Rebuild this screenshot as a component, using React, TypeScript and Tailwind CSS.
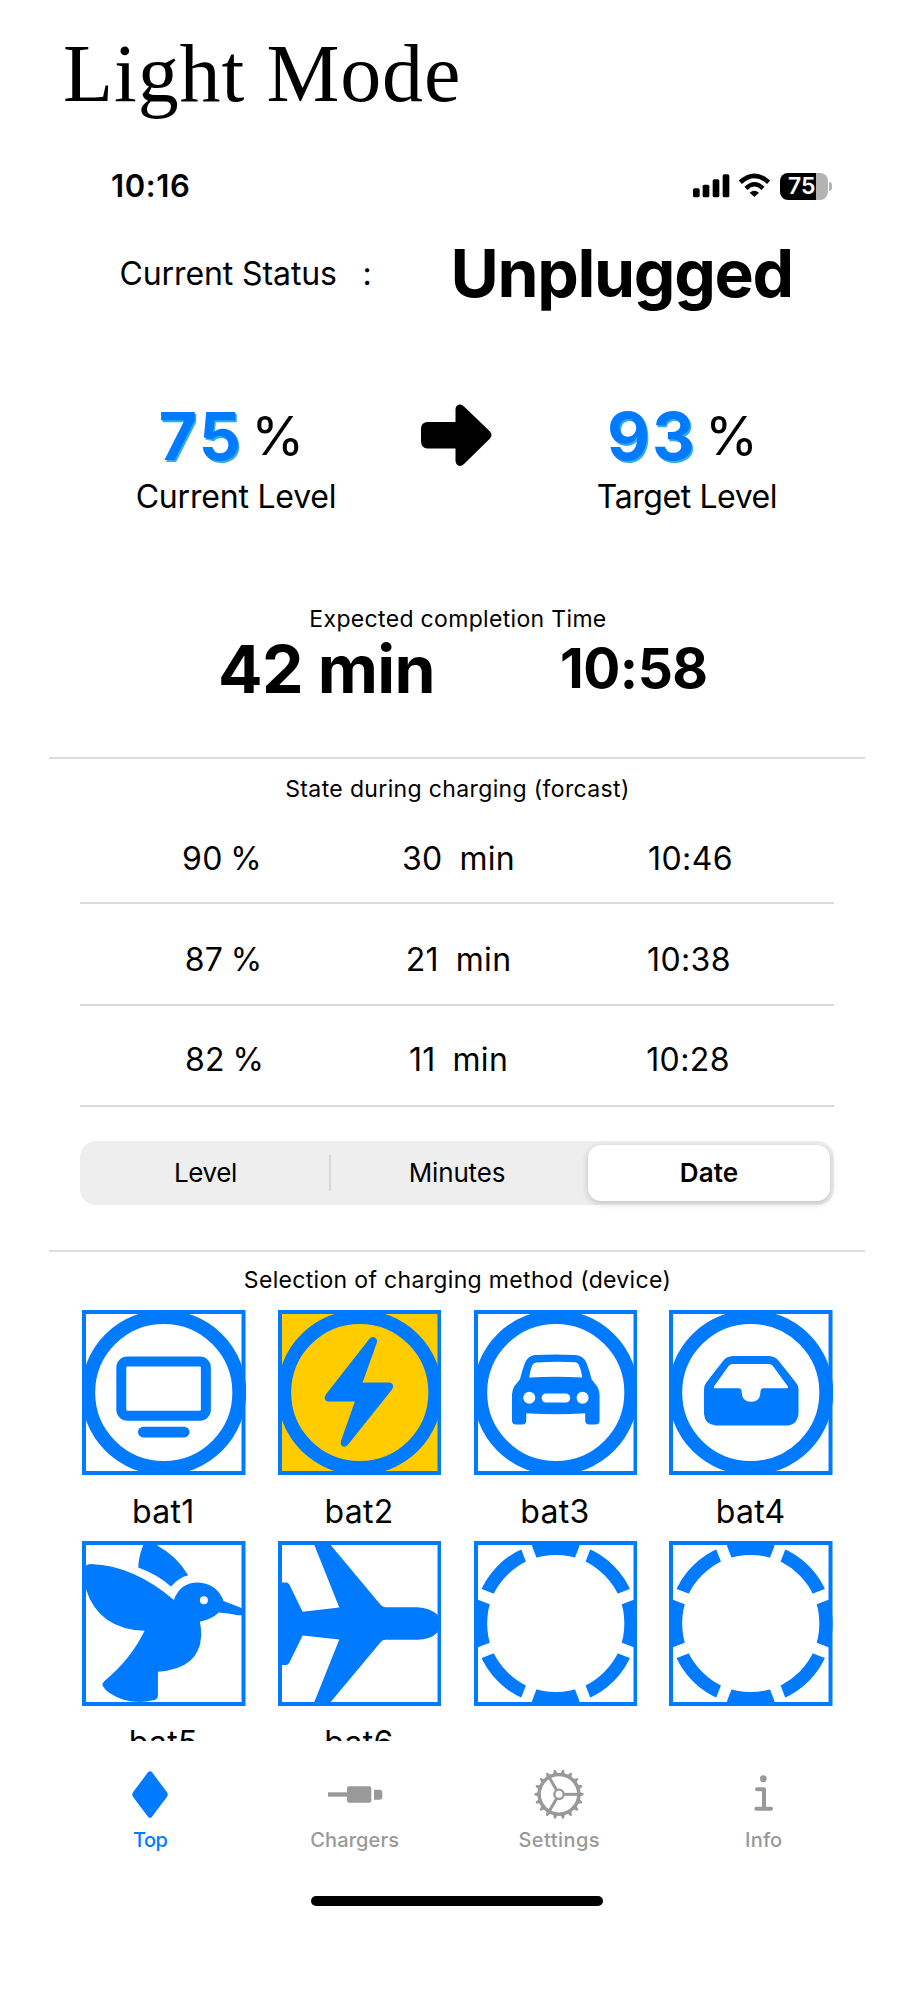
import type { ReactNode } from "react";

const BLUE = "#007aff";

function StatusIcons() {
  return (
    <div className="flex items-center">
      <svg className="h-[28px] w-[78px]" viewBox="757 66 234 84">
        <rect x="760" y="115" width="20" height="27" rx="5" />
        <rect x="789" y="104" width="20" height="38" rx="5" />
        <rect x="819" y="88" width="20" height="54" rx="5" />
        <rect x="849" y="73" width="20" height="69" rx="5" />
        <path d="M902 97Q944 58 987 97" fill="none" stroke="#000" strokeWidth="14" />
        <path d="M919 115Q944 91 970 115" fill="none" stroke="#000" strokeWidth="13" />
        <path d="M944 141L930 128Q944 116 958 128Z" />
      </svg>
      <div className="ml-[10px] flex h-[27px] w-[48px] items-center rounded-[8px] bg-[linear-gradient(to_right,#000_36px,#b3b3b3_36px)] pl-[8px] text-[23px] font-semibold leading-none text-white">
        75
      </div>
      <div className="ml-[1px] h-[9px] w-[3px] rounded-r-full bg-[#b3b3b3]" />
    </div>
  );
}

function Level({ value, label, className, numberClass, percentClass, labelTracking }: { value: string; label: string; className: string; numberClass: string; percentClass: string; labelTracking: string }) {
  return (
    <div className={className}>
      <div className="flex h-[80px] items-center justify-center">
        <span className={`text-[66px] font-bold leading-[80px] text-[#007aff] [text-shadow:1.5px_1.5px_0_#32ade6] ${numberClass}`}>{value}</span>
        <span className={`text-[54px] leading-[76px] ${percentClass}`}>%</span>
      </div>
      <div className={`text-center text-[32px] leading-[41px] ${labelTracking}`}>{label}</div>
    </div>
  );
}

function Ring() {
  return <circle cx="245.5" cy="248" r="227" fill="none" stroke={BLUE} strokeWidth="42" />;
}

function MonitorIcon() {
  return (
    <>
      <Ring />
      <g transform="translate(-35 -28)">
        <rect x="153" y="183" width="254" height="163" rx="18" fill="none" stroke={BLUE} strokeWidth="30" />
        <rect x="203" y="379" width="155" height="32" rx="16" />
      </g>
    </>
  );
}

function BoltIcon() {
  return (
    <>
      <Ring />
      <path transform="translate(-622 -28)" d="M896 115Q906 105 916 113Q922 118 919 126L876 246H957Q968 248 968 259Q966 265 962 270L832 433Q824 442 814 437Q808 431 811 422L853 303H772Q762 301 762 290Q764 284 768 279Z" />
    </>
  );
}

function CarIcon() {
  return (
    <>
      <Ring />
      <g transform="translate(-41 -28)">
        <path
          fillRule="evenodd"
          d="M225 163Q287 160 345 163Q370 165 379 187Q388 210 394 236L411 258Q418 270 418 284V360Q418 372 406 372H387Q375 372 375 360V338Q287 345 198 338V360Q198 372 186 372H167Q155 372 155 360V282Q155 270 162 257L179 236Q186 207 194 187Q203 165 225 163ZM228 186Q220 187 216 194Q209 210 207 231Q287 226 366 231Q364 210 356 193Q352 186 345 185Q287 182 228 186Z"
        />
        <circle cx="207" cy="292" r="18" fill="#fff" />
        <circle cx="367" cy="292" r="18" fill="#fff" />
        <rect x="244" y="279" width="86" height="27" rx="13.5" fill="#fff" />
      </g>
    </>
  );
}

function TrayIcon() {
  return (
    <>
      <Ring />
      <path
        transform="translate(-628 -28)"
        fillRule="evenodd"
        d="M820 166H928Q946 167 956 179L1009 246Q1017 255 1017 268V338Q1014 373 982 375H768Q736 373 733 340V268Q733 255 740 246L792 179Q802 167 820 166ZM820 190Q812 190 808 195L763 258Q761 263 766 263H838Q846 264 846 272Q846 304 875 304Q903 304 903 272Q903 264 911 263H982Q987 263 985 258L939 195Q935 190 928 190Z"
      />
    </>
  );
}

function BirdIcon() {
  return (
    <g transform="translate(-35 -30)">
      <path d="M220 40H262V44Q320 75 354 133Q325 140 302 167Q262 131 204 110Q205 75 220 40Z" />
      <path
        fillRule="evenodd"
        d="M42 110Q48 99 62 99Q190 104 311 207Q330 155 383 155Q440 158 460 210L520 234V253L503 253Q475 247 446 245Q425 265 389 273Q393 290 393 315Q388 415 263 423V495Q262 505 252 508Q205 520 160 507Q110 490 97 465Q95 458 101 452Q180 388 223 300Q85 295 47 175L40 150ZM389 208A12 12 0 1 0 413 208A12 12 0 1 0 389 208Z"
      />
    </g>
  );
}

function PlaneIcon() {
  return (
    <path
      transform="translate(-622 -30)"
      d="M628 155H645Q652 154 656 161L696 243L806 230L732 44L728 36H776L782 44L930 222Q936 229 945 229H1040Q1080 231 1101 252L1108 278L1101 305Q1080 326 1040 327H945Q936 327 930 334L782 512L776 520H728L732 512L806 326L696 314L656 396Q652 403 645 403H628Z"
    />
  );
}

function DashedRing() {
  return (
    <>
      <circle cx="245.5" cy="248" r="226" fill="none" stroke={BLUE} strokeWidth="40" />
      {[21, 69, 111, 159].map((a) => (
        <line key={a} x1="-20" x2="511" y1="248" y2="248" stroke="#fff" strokeWidth="34" transform={`rotate(${a} 245.5 248)`} />
      ))}
    </>
  );
}

function Device({ name, selected, children }: { name: string; selected?: boolean; children: ReactNode }) {
  return (
    <div className="h-[231px]">
      <svg className={`block h-[165px] w-full ${selected ? "bg-[#ffcc00]" : "bg-white"}`} viewBox="0 0 491 496" preserveAspectRatio="none" fill={BLUE}>
        {children}
        <rect x="6" y="6" width="479" height="484" fill="none" stroke={BLUE} strokeWidth="12" />
      </svg>
      <div className="mt-[6px] pr-[1px] text-center text-[32px] leading-[61px] tracking-[0.3px]">{name}</div>
    </div>
  );
}

function DiamondIcon() {
  return (
    <svg className="h-[51px] w-[40px]" viewBox="91 57 120 153" fill={BLUE}>
      <path d="M145 67Q151 60 157 67L201 125Q207 133 201 142L157 200Q151 207 145 200L101 142Q95 133 101 125Z" />
    </svg>
  );
}

function ChargerIcon() {
  return (
    <svg className="h-[51px] w-[56px]" viewBox="679 57 168 153" fill="#999">
      <rect x="682" y="127" width="60" height="13" />
      <rect x="739" y="109" width="73" height="49" rx="6" />
      <path d="M820 119H837Q845 120 845 128V140Q845 148 837 149H820Z" />
    </svg>
  );
}

function GearIcon() {
  return (
    <svg className="h-[51px] w-[52px]" viewBox="158 57 156 153" fill="none" stroke="#999">
      <circle cx="236" cy="133" r="59.5" strokeWidth="10.5" />
      <circle cx="236" cy="133" r="14" strokeWidth="7" />
      {[0, 120, 240].map((a) => (
        <line key={a} x1="251" y1="133" x2="294" y2="133" strokeWidth="9" transform={`rotate(${a} 236 133)`} />
      ))}
      {Array.from({ length: 18 }, (_, i) => (
        <path key={i} d="M297 126L309 130Q312 133 309 136L297 140Z" fill="#999" stroke="none" transform={`rotate(${i * 20} 236 133)`} />
      ))}
    </svg>
  );
}

function InfoIcon() {
  return (
    <svg className="h-[51px] w-[40px]" viewBox="792 57 120 153">
      <circle cx="850" cy="86" r="10" fill="#999" />
      <path d="M831 118H852V176M829 176H873" fill="none" stroke="#999" strokeWidth="12" strokeLinecap="round" strokeLinejoin="round" />
    </svg>
  );
}

function Tab({ label, color, children }: { label: string; color: string; children: ReactNode }) {
  return (
    <div className={`flex flex-col items-center text-[20px] font-medium leading-[40px] ${color}`}>
      {children}
      <span>{label}</span>
    </div>
  );
}

const forecast = [
  { level: "90 %", min: "30", time: "10:46", row: "h-[85px] pb-[3px]", first: "", last: "pl-[3px]" },
  { level: "87 %", min: "21", time: "10:38", row: "h-[102px] pt-[11px]", first: "pl-[3px]", last: "" },
  { level: "82 %", min: "11", time: "10:28", row: "h-[101px] pt-[9px]", first: "pl-[5px]", last: "pr-[2px]" },
];

export default function App() {
  return (
    <div className="h-[2000px] w-[924px] overflow-hidden bg-white font-['Inter',sans-serif] text-black">
      <h1 className="h-[146px] pl-[63px] font-['Liberation_Serif',serif] text-[82px] font-normal leading-[147px] tracking-[0.88px]">Light Mode</h1>

      <div className="flex h-[80px] items-center justify-between pl-[111px] pr-[92px]">
        <span className="pt-px text-[31px] font-semibold tracking-[0.6px]">10:16</span>
        <StatusIcons />
      </div>

      <div className="flex h-[94px] items-center pl-[119.5px]">
        <span className="w-[243px] pt-[2px] text-[32px] tracking-[-0.1px]">Current Status</span>
        <span className="w-[88px] pt-[2px] text-[32px]">:</span>
        <span className="text-[66px] font-bold leading-none tracking-[-1.34px]">Unplugged</span>
      </div>

      <div className="mt-[76px] flex">
        <Level value="75" label="Current Level" className="ml-[116px] w-[240px]" numberClass="ml-[-9px] tracking-[2.2px]" percentClass="ml-[8px]" labelTracking="tracking-[-0.2px]" />
        <div className="flex h-[77px] w-[200px] items-center justify-center">
          <svg className="h-[62px] w-[71px]" viewBox="421 404 71 62">
            <path d="M427 422H455.500V409Q456 404.500 460 404.500Q462 404.500 464 406.500L490 431.500Q493 435 490 438.500L464 464Q462 466 460 466Q456 465.500 455.500 461V448.500H427Q421 448 421 441V429Q421 422.500 427 422Z" />
          </svg>
        </div>
        <Level value="93" label="Target Level" className="ml-[11px] w-[240px]" numberClass="ml-[-9px] tracking-[2.2px]" percentClass="ml-[8px]" labelTracking="tracking-[-0.43px]" />
      </div>

      <div className="mt-[86px] pr-[8px] text-center text-[23px] leading-[33px] tracking-[0.33px]">Expected completion Time</div>
      <div className="flex h-[65px] items-center pl-[218px] font-bold leading-none">
        <span className="w-[342px] text-[66px] tracking-[-0.7px]">42 min</span>
        <span className="pb-px text-[55px] tracking-[-0.5px]">10:58</span>
      </div>

      <div className="mx-[49px] mt-[56px] h-[2px] w-[816px] bg-[#dcdcdc]" />
      <div className="h-[60px] pr-[9px] text-center text-[23px] leading-[61px] tracking-[0.36px]">State during charging (forcast)</div>

      <div className="mx-[80px] w-[754px] text-[32px]">
        {forecast.map((f) => (
          <div key={f.time} className={`grid grid-cols-[284px_189px_272px] items-center border-b-2 border-[#dadada] text-center ${f.row}`}>
            <span className={`tracking-[0.2px] [word-spacing:-1.5px] ${f.first}`}>{f.level}</span>
            <span className="flex justify-center gap-[17px] tracking-[0.3px]">
              <span>{f.min}</span>
              <span>min</span>
            </span>
            <span className={`tracking-[0.4px] ${f.last}`}>{f.time}</span>
          </div>
        ))}
      </div>

      <div className="mx-[80px] mt-[34px] flex h-[64px] w-[754px] items-center rounded-[16px] bg-[#eeeeee] text-center text-[26px]">
        <span className="w-[249px] pb-[2px] pl-[2px] tracking-[-0.4px]">Level</span>
        <span className="h-[36px] w-[2px] bg-[#d8d8d8]" />
        <span className="w-[250px] pb-[2px] pl-[2px] tracking-[-0.15px]">Minutes</span>
        <span className="ml-[7px] flex h-[56px] w-[242px] items-center justify-center rounded-[13px] bg-white pb-[2px] font-semibold tracking-[0.1px] shadow-[0_2px_7px_rgba(0,0,0,0.2)]">Date</span>
      </div>

      <div className="mx-[49px] mt-[45px] h-[2px] w-[816px] bg-[#dcdcdc]" />
      <div className="h-[54px] pr-[9px] text-center text-[23px] leading-[56px] tracking-[0.33px]">Selection of charging method (device)</div>

      <div className="mt-[4px] grid h-[431px] grid-cols-[repeat(4,163.5px)] content-start gap-x-[32.3px] overflow-hidden pl-[82px]">
        <Device name="bat1"><MonitorIcon /></Device>
        <Device name="bat2" selected><BoltIcon /></Device>
        <Device name="bat3"><CarIcon /></Device>
        <Device name="bat4"><TrayIcon /></Device>
        <Device name="bat5"><BirdIcon /></Device>
        <Device name="bat6"><PlaneIcon /></Device>
        <Device name=""><DashedRing /></Device>
        <Device name=""><DashedRing /></Device>
      </div>

      <nav className="mx-[48px] grid w-[818px] grid-cols-4 pt-[28px]">
        <Tab label="Top" color="text-[#007aff] tracking-[-0.5px]"><DiamondIcon /></Tab>
        <Tab label="Chargers" color="text-[#999999] tracking-[0.1px]"><ChargerIcon /></Tab>
        <Tab label="Settings" color="text-[#999999] tracking-[0.47px]"><GearIcon /></Tab>
        <Tab label="Info" color="text-[#999999] tracking-[0.16px]"><InfoIcon /></Tab>
      </nav>

      <div className="ml-[311px] mt-[36px] h-[10px] w-[292px] rounded-full bg-black" />
    </div>
  );
}
